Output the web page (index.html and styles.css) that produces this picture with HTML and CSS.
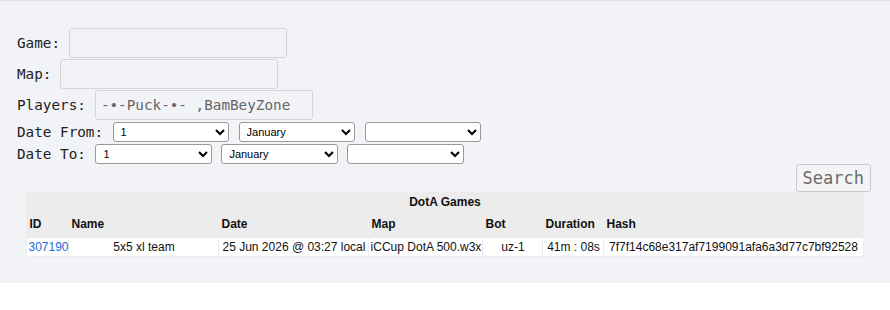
FILE: index.html
```html
<!DOCTYPE html>
<html lang="en">
<head>
    <meta charset="UTF-8">
    <meta name="viewport" content="width=device-width, initial-scale=1.0">
    <title>DotA Games</title>
    <link rel="stylesheet" href="styles.css">
</head>
<body>
    <div class="page">
        <form class="search-form">
            <div class="field-row">
                <label for="game">Game:</label>
                <input type="text" id="game" class="text-input">
            </div>
            <div class="field-row">
                <label for="map">Map:</label>
                <input type="text" id="map" class="text-input">
            </div>
            <div class="field-row">
                <label for="players">Players:</label>
                <input type="text" id="players" class="text-input" placeholder="-•-Puck-•- ,BamBeyZone">
            </div>
            <div class="date-row">
                <label>Date From:</label>
                <select class="date-select"><option>1</option></select>
                <select class="date-select"><option>January</option></select>
                <select class="date-select"><option></option></select>
            </div>
            <div class="date-row">
                <label>Date To:</label>
                <select class="date-select"><option>1</option></select>
                <select class="date-select"><option>January</option></select>
                <select class="date-select"><option></option></select>
            </div>
            <div class="search-row">
                <button type="submit" class="search-btn">Search</button>
            </div>
        </form>

        <!-- Results -->
        <table class="games">
            <colgroup>
                <col class="col-id">
                <col class="col-name">
                <col class="col-date">
                <col class="col-map">
                <col class="col-bot">
                <col class="col-duration">
                <col class="col-hash">
            </colgroup>
            <tr>
                <th colspan="7" class="caption">DotA Games</th>
            </tr>
            <tr class="head">
                <th>ID</th>
                <th>Name</th>
                <th>Date</th>
                <th>Map</th>
                <th>Bot</th>
                <th>Duration</th>
                <th>Hash</th>
            </tr>
            <tr>
                <td class="id-cell"><a href="#">307190</a></td>
                <td>5x5 xl team</td>
                <td>25 Jun 2026 @ 03:27 local</td>
                <td>iCCup DotA 500.w3x</td>
                <td>uz-1</td>
                <td>41m : 08s</td>
                <td>7f7f14c68e317af7199091afa6a3d77c7bf92528</td>
            </tr>
        </table>
    </div>
</body>
</html>
```

FILE: styles.css
```css
* {
    margin: 0;
    padding: 0;
    box-sizing: border-box;
}

body {
    background-color: #ffffff;
}

.page {
    background-color: #f2f3f7;
    border-top: 1px solid #dfe0e5;
    padding: 27px 0 26px;
}

.search-form {
    padding: 0 19px 0 17px;
    font-family: "DejaVu Sans Mono", monospace;
    font-size: 14.3px;
    color: #222;
}

.field-row {
    display: flex;
    align-items: center;
    gap: 9px;
    height: 30px;
    margin-bottom: 1px;
}

.text-input {
    width: 218px;
    height: 30px;
    padding: 0 5px;
    border: 1px solid #d3d4d8;
    border-radius: 3px;
    background-color: transparent;
    font-family: "DejaVu Sans Mono", monospace;
    font-size: 14.3px;
    color: #222;
}

.text-input::placeholder {
    color: #666;
}

.date-row {
    display: flex;
    align-items: center;
    gap: 9.5px;
    height: 22px;
}

.date-select {
    width: 116.5px;
    height: 20px;
    border: 1px solid #999;
    border-radius: 3px;
    background-color: #fff;
    font-family: "Liberation Sans", Arial, sans-serif;
    font-size: 11px;
    color: #000;
    padding-left: 3px;
}

.search-row {
    display: flex;
    justify-content: flex-end;
    margin-top: -1px;
}

.search-btn {
    height: 28px;
    padding: 0 6px;
    border: 1px solid #c9cacd;
    border-radius: 3px;
    background-color: #f4f4f6;
    font-family: "DejaVu Sans Mono", monospace;
    font-size: 17px;
    color: #6a6a6a;
}

.games {
    width: 837px;
    margin: 0 auto;
    border-collapse: separate;
    border-spacing: 1px;
    table-layout: fixed;
    background-color: #ececec;
    font-family: "Liberation Sans", Arial, sans-serif;
    font-size: 12px;
    color: #111;
}

.col-id { width: 41px; }
.col-name { width: 149px; }
.col-date { width: 149px; }
.col-map { width: 113px; }
.col-bot { width: 59px; }
.col-duration { width: 60px; }
.col-hash { width: 258px; }

.games th {
    text-align: left;
    padding: 0 2px;
    font-weight: bold;
}

.games th.caption {
    text-align: center;
    height: 17px;
}

.head th {
    height: 26px;
}

.games td {
    background-color: #fff;
    height: 18px;
    padding: 0 1px;
    text-align: center;
    white-space: nowrap;
}

.id-cell a {
    color: #1a6fd8;
    text-decoration: none;
}
```
